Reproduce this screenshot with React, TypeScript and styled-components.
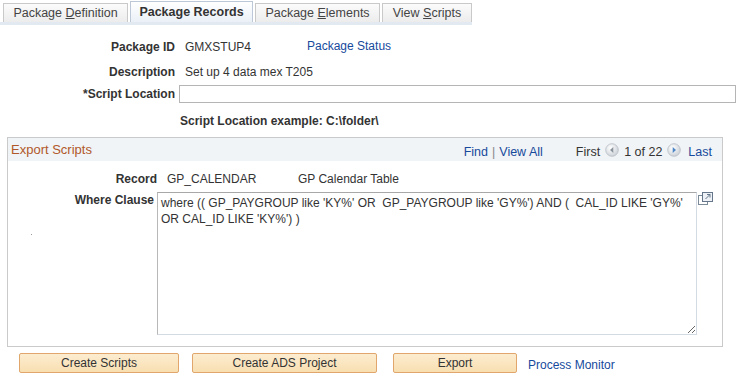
import React from "react";
import styled, { createGlobalStyle } from "styled-components";

const Global = createGlobalStyle`
  body {
    margin: 0;
    background: #fff;
    font-family: "Liberation Sans", Arial, sans-serif;
    font-size: 12px;
    color: #333;
  }
`;

const Page = styled.div`
  width: 742px;
  height: 382px;
  overflow: hidden;
`;

const TabBar = styled.div`
  display: flex;
  align-items: flex-end;
  gap: 2px;
  padding: 1px 0 0 3px;
  width: 469px;
  border-bottom: 3px solid #e3e9f1;
`;

const Tab = styled.div<{ active?: boolean; w: number }>`
  box-sizing: border-box;
  width: ${({ w }) => w}px;
  height: ${({ active }) => (active ? "21px" : "19px")};
  display: flex;
  align-items: center;
  justify-content: center;
  font-size: 12.5px;
  font-weight: ${({ active }) => (active ? "bold" : "normal")};
  color: ${({ active }) => (active ? "#333" : "#444")};
  border: 1px solid ${({ active }) => (active ? "#bcc8d8" : "#c9c9c9")};
  border-bottom: none;
  background: ${({ active }) =>
    active ? "linear-gradient(#ffffff, #eaf0f7)" : "linear-gradient(#fbfbfb, #ececec)"};
  u { text-decoration: underline; }
`;

const Fields = styled.div`
  display: flex;
  flex-direction: column;
  padding-top: 12px;
`;

const Row = styled.div<{ h: number; gap?: number }>`
  display: flex;
  align-items: center;
  height: ${({ h }) => h}px;
  gap: ${({ gap }) => gap ?? 10}px;
`;

const Label = styled.div<{ w: number }>`
  width: ${({ w }) => w}px;
  text-align: right;
  font-weight: bold;
  color: #333;
  flex-shrink: 0;
`;

const Value = styled.div<{ w?: number }>`
  color: #333;
  ${({ w }) => (w ? `width: ${w}px;` : "")}
`;

const Link = styled.a`
  color: #164a9c;
  text-decoration: none;
  cursor: pointer;
`;

const TextInput = styled.div`
  box-sizing: border-box;
  width: 557px;
  height: 18px;
  border: 1px solid #b5b5b5;
  background: #fff;
`;

const Note = styled.div`
  padding-left: 180px;
  font-weight: bold;
  color: #333;
`;

const Panel = styled.div`
  box-sizing: border-box;
  margin: -1px 0 0 7px;
  width: 716px;
  height: 210px;
  border: 1px solid #cacaca;
`;

const PanelHead = styled.div`
  display: flex;
  align-items: center;
  height: 23px;
  background: #f1f4f6;
  padding: 0 10px 0 3px;
`;

const PanelTitle = styled.div`
  color: #b0582a;
  font-size: 13px;
  flex: 1;
  margin-top: -1px;
`;

const Nav = styled.div`
  display: flex;
  align-items: center;
  font-size: 12.5px;
  margin-top: 4px;
`;

const Sep = styled.span`
  color: #888;
  margin: 0 4px;
`;

const Pager = styled.div`
  display: flex;
  align-items: center;
  gap: 5px;
  margin-left: 33px;
  color: #333;
`;

const PanelBody = styled.div`
  padding-top: 10px;
`;

const ClauseRow = styled.div`
  display: flex;
  align-items: flex-start;
  margin-top: 5px;
  gap: 1px;
`;

const Clause = styled.textarea`
  box-sizing: border-box;
  width: 540px;
  height: 143px;
  margin: 0;
  padding: 2px 3px;
  font-family: "Liberation Sans", Arial, sans-serif;
  font-size: 12px;
  line-height: 16px;
  color: #333;
  border: 1px solid #d3dae3;
  border-top-color: #a8a8a8;
  border-left-color: #b8b8b8;
  outline: none;
  resize: vertical;
`;

const Dot = styled.div`
  width: 1px;
  height: 1px;
  background: #999;
  margin: -101px 0 0 23px;
`;

const Buttons = styled.div`
  display: flex;
  align-items: center;
  padding: 6px 0 0 19px;
`;

const Button = styled.button<{ w: number; ml?: number }>`
  box-sizing: border-box;
  width: ${({ w }) => w}px;
  height: 20px;
  margin-left: ${({ ml }) => ml ?? 0}px;
  padding: 0;
  font-family: "Liberation Sans", Arial, sans-serif;
  font-size: 12px;
  color: #333;
  border: 1px solid #e0a66c;
  border-radius: 2px;
  background: linear-gradient(#fcecd0, #f8dfb1);
`;

const PagerIcon = ({ dir }: { dir: "prev" | "next" }) => (
  <svg width="14" height="14" viewBox="0 0 14 14" style={{ marginTop: -4 }}>
    <defs>
      <radialGradient id={`g-${dir}`} cx="0.4" cy="0.35" r="0.7">
        <stop offset="0" stopColor="#ffffff" />
        <stop offset="1" stopColor="#c9cfd6" />
      </radialGradient>
    </defs>
    <circle cx="7" cy="7" r="6.3" fill={`url(#g-${dir})`} stroke="#b7bec7" strokeWidth="0.8" />
    {dir === "prev" ? (
      <path d="M8.3 4 L5 7 L8.3 10 Z" fill="#8a939c" />
    ) : (
      <path d="M5.7 4 L9 7 L5.7 10 Z" fill="#4d86c6" />
    )}
  </svg>
);

const PopOut = () => (
  <svg width="15" height="13" viewBox="0 0 15 13">
    <rect x="0.5" y="3.5" width="9" height="9" fill="#fff" stroke="#7d8a97" />
    <rect x="4.5" y="0.5" width="10" height="9" fill="#eef2f6" stroke="#65768a" />
    <path d="M7.5 7 L12 2.5 M9 2.5 H12 V5.5" fill="none" stroke="#65768a" strokeWidth="1" />
  </svg>
);

const App = () => (
  <Page>
    <Global />
    <TabBar>
      <Tab w={125}>Package&nbsp;<u>D</u>efinition</Tab>
      <Tab w={123} active>Package Records</Tab>
      <Tab w={125}>Package&nbsp;<u>E</u>lements</Tab>
      <Tab w={90}>View&nbsp;<u>S</u>cripts</Tab>
    </TabBar>

    <Fields>
      <Row h={20}>
        <Label w={175}>Package ID</Label>
        <Value w={112}>GMXSTUP4</Value>
        <Link style={{ marginTop: -3 }}>Package Status</Link>
      </Row>
      <Row h={24} style={{ marginTop: 3 }}>
        <Label w={175}>Description</Label>
        <Value>Set up 4 data mex T205</Value>
      </Row>
      <Row h={20} gap={4}>
        <Label w={175}>*Script Location</Label>
        <TextInput />
      </Row>
      <Row h={34}>
        <Note>Script Location example: C:\folder\</Note>
      </Row>
    </Fields>

    <Panel>
      <PanelHead>
        <PanelTitle>Export Scripts</PanelTitle>
        <Nav>
          <Link>Find</Link>
          <Sep>|</Sep>
          <Link>View All</Link>
          <Pager>
            <span>First</span>
            <PagerIcon dir="prev" />
            <span>1 of 22</span>
            <PagerIcon dir="next" />
            <Link style={{ marginLeft: 2 }}>Last</Link>
          </Pager>
        </Nav>
      </PanelHead>
      <PanelBody>
        <Row h={16}>
          <Label w={149}>Record</Label>
          <Value w={121}>GP_CALENDAR</Value>
          <Value>GP Calendar Table</Value>
        </Row>
        <ClauseRow>
          <Label w={146} style={{ paddingTop: 1, marginRight: 2 }}>Where Clause</Label>
          <Clause
            readOnly
            value={"where (( GP_PAYGROUP like 'KY%' OR  GP_PAYGROUP like 'GY%') AND (  CAL_ID LIKE 'GY%' OR CAL_ID LIKE 'KY%') )"}
          />
          <PopOut />
        </ClauseRow>
        <Dot />
      </PanelBody>
    </Panel>

    <Buttons>
      <Button w={160}>Create Scripts</Button>
      <Button w={185} ml={13}>Create ADS Project</Button>
      <Button w={124} ml={16}>Export</Button>
      <Link style={{ marginLeft: 11, marginTop: 3 }}>Process Monitor</Link>
    </Buttons>
  </Page>
);

export default App;
